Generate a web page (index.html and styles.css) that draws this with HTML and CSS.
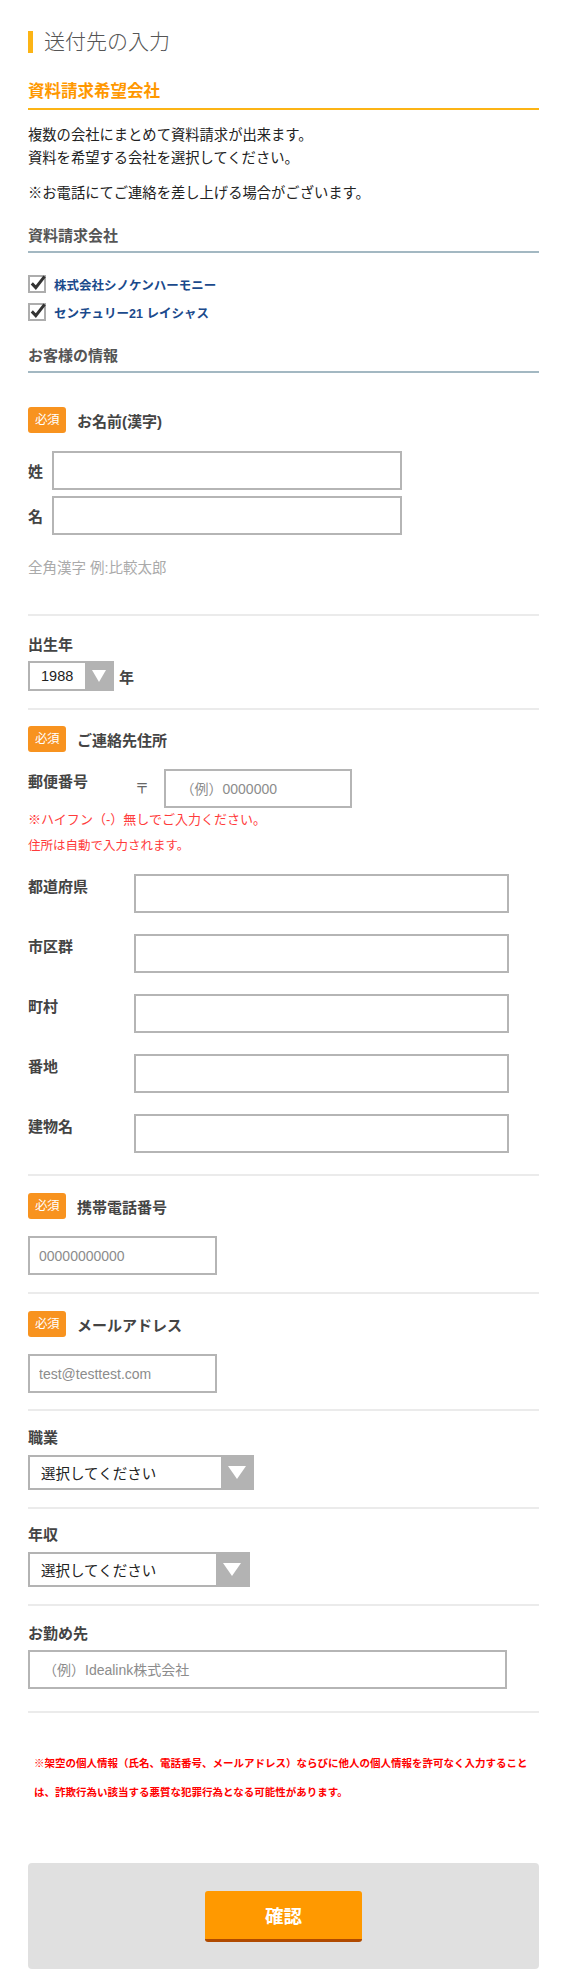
FILE: index.html
```html
<!DOCTYPE html>
<html lang="ja">
<head>
<meta charset="utf-8">
<title>送付先の入力</title>
<link rel="stylesheet" href="styles.css">
</head>
<body>
<div class="wrap">
  <h1 class="page-title">送付先の入力</h1>

  <h2 class="sec-head">資料請求希望会社</h2>
  <p class="intro">複数の会社にまとめて資料請求が出来ます。<br>資料を希望する会社を選択してください。</p>
  <p class="intro intro-2">※お電話にてご連絡を差し上げる場合がございます。</p>

  <h3 class="sub-head">資料請求会社</h3>
  <div class="checks">
    <label class="check-row">
      <svg class="cb" width="20" height="19" viewBox="0 0 20 19"><rect x="1" y="2" width="16" height="16" fill="#fff" stroke="#adadad" stroke-width="2"/><path d="M3.8 9.4 L7.8 13.6 L16.6 2.4" fill="none" stroke="#333" stroke-width="3"/></svg>
      <span>株式会社シノケンハーモニー</span>
    </label>
    <label class="check-row">
      <svg class="cb" width="20" height="19" viewBox="0 0 20 19"><rect x="1" y="2" width="16" height="16" fill="#fff" stroke="#adadad" stroke-width="2"/><path d="M3.8 9.4 L7.8 13.6 L16.6 2.4" fill="none" stroke="#333" stroke-width="3"/></svg>
      <span>センチュリー21 レイシャス</span>
    </label>
  </div>

  <h3 class="sub-head sub-head-2">お客様の情報</h3>

  <div class="field field-name">
    <div class="field-head"><span class="badge">必須</span><span class="field-label">お名前(漢字)</span></div>
    <div class="name-row"><span class="name-label">姓</span><input class="inp inp-name" type="text"></div>
    <div class="name-row name-row-2"><span class="name-label">名</span><input class="inp inp-name" type="text"></div>
    <p class="hint">全角漢字 例:比較太郎</p>
  </div>

  <div class="field field-birth">
    <div class="plain-label">出生年</div>
    <div class="year-row">
      <div class="sel sel-year"><span class="sel-text">1988</span><span class="sel-arrow"><i class="tri tri-sm"></i></span></div>
      <span class="year-unit">年</span>
    </div>
  </div>

  <div class="field field-addr">
    <div class="field-head"><span class="badge">必須</span><span class="field-label">ご連絡先住所</span></div>
    <div class="zip-row">
      <span class="row-label zip-label">郵便番号</span>
      <span class="zip-mark">〒</span>
      <input class="inp inp-zip" type="text" placeholder="（例）0000000">
    </div>
    <p class="warn">※ハイフン（-）無しでご入力ください。<br><span class="warn-2">住所は自動で入力されます。</span></p>
    <div class="addr-row addr-first"><span class="row-label">都道府県</span><input class="inp inp-addr" type="text"></div>
    <div class="addr-row"><span class="row-label">市区群</span><input class="inp inp-addr" type="text"></div>
    <div class="addr-row"><span class="row-label">町村</span><input class="inp inp-addr" type="text"></div>
    <div class="addr-row"><span class="row-label">番地</span><input class="inp inp-addr" type="text"></div>
    <div class="addr-row"><span class="row-label">建物名</span><input class="inp inp-addr" type="text"></div>
  </div>

  <div class="field field-tel">
    <div class="field-head"><span class="badge">必須</span><span class="field-label">携帯電話番号</span></div>
    <input class="inp inp-short inp-tel" type="text" placeholder="00000000000">
  </div>

  <div class="field field-mail">
    <div class="field-head"><span class="badge">必須</span><span class="field-label">メールアドレス</span></div>
    <input class="inp inp-short inp-mail" type="text" placeholder="test@testtest.com">
  </div>

  <div class="field field-job">
    <div class="plain-label">職業</div>
    <div class="sel sel-big sel-job"><span class="sel-text">選択してください</span><span class="sel-arrow"><i class="tri tri-lg"></i></span></div>
  </div>

  <div class="field field-income">
    <div class="plain-label">年収</div>
    <div class="sel sel-big sel-income"><span class="sel-text">選択してください</span><span class="sel-arrow"><i class="tri tri-lg"></i></span></div>
  </div>

  <div class="field field-work">
    <div class="plain-label">お勤め先</div>
    <input class="inp inp-work" type="text" placeholder="（例）Idealink株式会社">
  </div>

  <p class="notice">※架空の個人情報（氏名、電話番号、メールアドレス）ならびに他人の個人情報を許可なく入力すること<br>は、詐欺行為い該当する悪質な犯罪行為となる可能性があります。</p>

  <div class="submit-box">
    <button class="btn-confirm" type="button">確認</button>
  </div>
</div>
</body>
</html>
```

FILE: styles.css
```css
* { box-sizing: border-box; }

body {
  margin: 0;
  background: #fff;
  color: #333;
  font-family: "Liberation Sans", "Noto Sans CJK JP", sans-serif;
}

.wrap {
  width: 511px;
  margin-left: 28px;
  padding-top: 31px;
  padding-bottom: 14px;
}

.page-title {
  margin: 0;
  border-left: 5px solid #fcb415;
  padding-left: 11px;
  height: 22px;
  font-size: 21px;
  line-height: 22px;
  font-weight: 300;
  color: #555;
}

.sec-head {
  margin: 27px 0 0;
  font-size: 16.5px;
  line-height: 22px;
  font-weight: bold;
  color: #ff9800;
  padding-bottom: 6px;
  border-bottom: 2px solid #fcb415;
}

.intro {
  margin: 14px 0 0;
  font-size: 14.3px;
  line-height: 22.5px;
  color: #222;
}
.intro-2 { margin-top: 13px; }

.sub-head {
  margin: 20.5px 0 0;
  font-size: 15px;
  line-height: 22px;
  font-weight: bold;
  color: #555;
  padding-bottom: 4px;
  border-bottom: 2px solid #a3b8c2;
}
.sub-head-2 { margin-top: 24px; }

.checks {
  margin-top: 22px;
  display: flex;
  flex-direction: column;
  gap: 10px;
}
.check-row {
  display: flex;
  align-items: center;
  height: 18px;
  gap: 6px;
  color: #1b4a8c;
  font-size: 12.5px;
  font-weight: bold;
}
.cb { overflow: visible; margin-top: -1px; }

.field {
  border-bottom: 2px solid #ebebeb;
}
.field-head {
  display: flex;
  align-items: center;
  height: 26px;
}
.badge {
  width: 38px;
  height: 26px;
  border-radius: 3px;
  background: #f8931f;
  color: #fff;
  font-size: 12.5px;
  line-height: 26px;
  text-align: center;
  letter-spacing: -0.5px;
}
.field-label {
  margin-left: 11px;
  font-size: 15px;
  font-weight: bold;
  color: #444;
}

.inp {
  display: block;
  height: 39px;
  border: 2px solid #b5b5b5;
  background: #fff;
  padding: 0 0 0 13px;
  font-family: "Liberation Sans", "Noto Sans CJK JP", sans-serif;
  font-size: 14px;
  color: #333;
  outline: none;
}
.inp::placeholder { color: #8c8c8c; }

.field-name { padding: 34px 0 35px; }
.name-row {
  display: flex;
  align-items: center;
  margin-top: 18px;
}
.name-row-2 { margin-top: 6px; }
.name-label {
  width: 24px;
  font-size: 15px;
  font-weight: bold;
  color: #444;
}
.inp-name { width: 350px; }
.hint {
  margin: 22px 0 0;
  font-size: 14.5px;
  line-height: 22px;
  color: #aaa;
}

.plain-label {
  font-size: 15px;
  line-height: 22px;
  font-weight: bold;
  color: #444;
}

.field-birth { padding: 18px 0 17px; }
.year-row {
  display: flex;
  align-items: center;
  margin-top: 5px;
}
.sel {
  display: flex;
  border: 2px solid #b3b3b3;
  background: #fff;
}
.sel-text {
  flex: 1;
  padding-left: 11px;
  font-size: 14.5px;
  color: #222;
  display: flex;
  align-items: center;
}
.sel-arrow {
  background: #b3b3b3;
  display: flex;
  align-items: center;
  justify-content: center;
}
.tri {
  display: block;
  width: 0;
  height: 0;
}
.tri-sm {
  border-left: 7.5px solid transparent;
  border-right: 7.5px solid transparent;
  border-top: 12px solid #fff;
}
.tri-lg {
  border-left: 9px solid transparent;
  border-right: 9px solid transparent;
  border-top: 13px solid #fff;
}
.sel-year { width: 86px; height: 30px; }
.sel-year .sel-arrow { width: 27px; }
.year-unit {
  margin-left: 5px;
  font-size: 15px;
  font-weight: bold;
  color: #444;
}

.field-addr { padding: 16px 0 21px; }
.zip-row {
  display: flex;
  align-items: flex-start;
  margin-top: 17px;
}
.row-label {
  width: 106px;
  flex: none;
  margin-top: 2px;
  font-size: 15px;
  line-height: 22px;
  font-weight: bold;
  color: #444;
}
.zip-label { width: 107px; }
.zip-mark {
  width: 28.5px;
  flex: none;
  margin-top: 8px;
  font-size: 14px;
  line-height: 22px;
  color: #666;
}
.inp-zip { width: 188px; padding-left: 15px; }
.warn {
  margin: -1px 0 0;
  font-size: 13px;
  line-height: 26px;
  color: #ff3b3b;
}
.warn-2 { font-size: 12.5px; }
.addr-row {
  display: flex;
  align-items: flex-start;
  margin-top: 21px;
}
.addr-first { margin-top: 15px; }
.inp-addr { width: 375px; }

.field-tel { padding: 17px 0 17px; }
.field-mail { padding: 17px 0 16px; }
.inp-short { width: 189px; margin-top: 17px; padding-left: 9px; }

.field-job { padding: 16px 0 17px; }
.field-income { padding: 15px 0 17px; }
.sel-big { height: 35px; margin-top: 6px; }
.sel-job { width: 226px; }
.sel-job .sel-arrow { width: 31px; }
.sel-income { width: 222px; }
.sel-income .sel-arrow { width: 32px; }

.field-work { padding: 17px 0 22px; }
.inp-work { width: 479px; margin-top: 5px; }

.notice {
  margin: 35.5px 0 0;
  padding-left: 6px;
  font-size: 10.5px;
  line-height: 29px;
  font-weight: bold;
  color: #ff0000;
  white-space: nowrap;
}

.submit-box {
  margin-top: 56.5px;
  background: #e0e0e0;
  border-radius: 4px;
  padding: 28px 0 27px;
  display: flex;
  justify-content: center;
}
.btn-confirm {
  width: 157px;
  height: 51px;
  border: 0;
  border-bottom: 3px solid #b04a00;
  border-radius: 3px;
  background: #ff9900;
  color: #fff;
  font-family: "Noto Sans CJK JP", sans-serif;
  font-size: 18.5px;
  font-weight: bold;
  line-height: 48px;
  padding: 0;
}
```
